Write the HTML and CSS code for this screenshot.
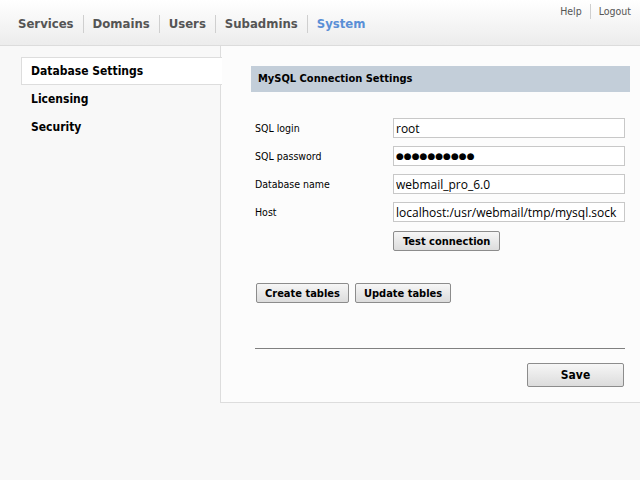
FILE: index.html
```html
<!DOCTYPE html>
<html>
<head>
<meta charset="utf-8">
<link rel="stylesheet" href="styles.css">
</head>
<body>
<div class="header">
  <nav class="mainnav">
    <a class="tab">Services</a>
    <a class="tab">Domains</a>
    <a class="tab">Users</a>
    <a class="tab">Subadmins</a>
    <a class="tab active">System</a>
  </nav>
  <div class="toplinks">
    <a class="tl">Help</a>
    <a class="tl">Logout</a>
  </div>
</div>
<div class="main">
  <ul class="sidenav">
    <li class="item selected">Database Settings</li>
    <li class="item">Licensing</li>
    <li class="item">Security</li>
  </ul>
  <div class="panel">
    <div class="title">MySQL Connection Settings</div>
    <div class="form">
      <div class="row"><label class="lbl">SQL login</label><input class="field" type="text" value="root"></div>
      <div class="row"><label class="lbl">SQL password</label><input class="field pw" type="text" value="●●●●●●●●●●"></div>
      <div class="row"><label class="lbl">Database name</label><input class="field" type="text" value="webmail_pro_6.0"></div>
      <div class="row"><label class="lbl">Host</label><input class="field" type="text" value="localhost:/usr/webmail/tmp/mysql.sock"></div>
      <div class="row btnrow"><span class="lbl"></span><button class="btn">Test connection</button></div>
    </div>
    <div class="tables">
      <button class="btn">Create tables</button>
      <button class="btn">Update tables</button>
    </div>
    <hr class="sep">
    <div class="savebar"><button class="btn save">Save</button></div>
  </div>
</div>
</body>
</html>
```
FILE: styles.css
```css
html, body {
  margin: 0;
  padding: 0;
  background: #f8f8f8;
  font-family: Tahoma, "DejaVu Sans Condensed", "DejaVu Sans", sans-serif;
  color: #000;
}
.header {
  height: 45px;
  border-bottom: 1px solid #dcdcdc;
  background: linear-gradient(#ffffff, #ececec);
  display: flex;
  justify-content: space-between;
}
.mainnav {
  display: flex;
  align-items: center;
  padding-left: 9px;
  padding-top: 2px;
}
.tab {
  font-weight: bold;
  font-size: 13px;
  color: #555555;
  padding: 0 9px;
  line-height: 18px;
  border-left: 1px solid #cfcfcf;
}
.tab:first-child { border-left: none; }
.tab.active { color: #5a8fd6; }
.toplinks {
  display: flex;
  align-items: flex-start;
  padding-top: 4px;
  padding-right: 1px;
}
.tl {
  font-size: 10.5px;
  color: #555555;
  padding: 0 8px;
  line-height: 15px;
  border-left: 1px solid #cfcfcf;
}
.tl:first-child { border-left: none; }
.main {
  display: flex;
  align-items: flex-start;
}
.sidenav {
  list-style: none;
  margin: 11px 0 0 21px;
  padding: 0;
  width: 199px;
  position: relative;
  z-index: 1;
}
.item {
  font-weight: bold;
  font-size: 12px;
  height: 28px;
  line-height: 28px;
  padding-left: 10px;
  box-sizing: border-box;
}
.item.selected {
  background: #ffffff;
  border: 1px solid #dddddd;
  border-right: none;
  line-height: 26px;
  padding-left: 9px;
  width: 201px;
}
.panel {
  flex: 1;
  background: #fcfcfc;
  border-left: 1px solid #dddddd;
  border-bottom: 1px solid #dddddd;
  height: 357px;
  box-sizing: border-box;
  padding: 20px 14px 0 30px;
}
.title {
  background: #c3ced9;
  height: 26px;
  line-height: 26px;
  font-size: 11px;
  font-weight: bold;
  padding-left: 7px;
  margin-right: -4px;
}
.form {
  margin-top: 22px;
  padding-left: 4px;
}
.row {
  display: flex;
  align-items: center;
  height: 28px;
}
.lbl {
  width: 138px;
  font-size: 10.5px;
}
.field {
  width: 232px;
  height: 20px;
  box-sizing: border-box;
  border: 1px solid #c8c8c8;
  background: #fff;
  font-family: "Open Sans", sans-serif;
  font-size: 12px;
  padding: 0 2px;
  margin: 0;
  outline: none;
  color: #000;
}
.field.pw {
  font-family: "DejaVu Sans", sans-serif;
  font-size: 9px;
}
.btnrow { margin-top: 1px; }
.btn {
  font-family: Tahoma, "DejaVu Sans Condensed", "DejaVu Sans", sans-serif;
  font-weight: bold;
  font-size: 11px;
  height: 20px;
  padding: 0 8px;
  border: 1px solid #8c8c8c;
  border-radius: 2px;
  background: linear-gradient(#f6f6f6, #dcdcdc);
  color: #000;
  margin: 0;
}
.btnrow .btn { padding: 0 9px; }
.tables {
  margin-top: 28px;
  padding-left: 5px;
  display: flex;
  gap: 6px;
}
.sep {
  margin: 45px 1px 0 4px;
  border: none;
  border-top: 1px solid #808080;
  height: 0;
}
.savebar {
  display: flex;
  justify-content: flex-end;
  margin-top: 14px;
  padding-right: 2px;
}
.btn.save {
  width: 97px;
  height: 24px;
  font-size: 12px;
}
```
